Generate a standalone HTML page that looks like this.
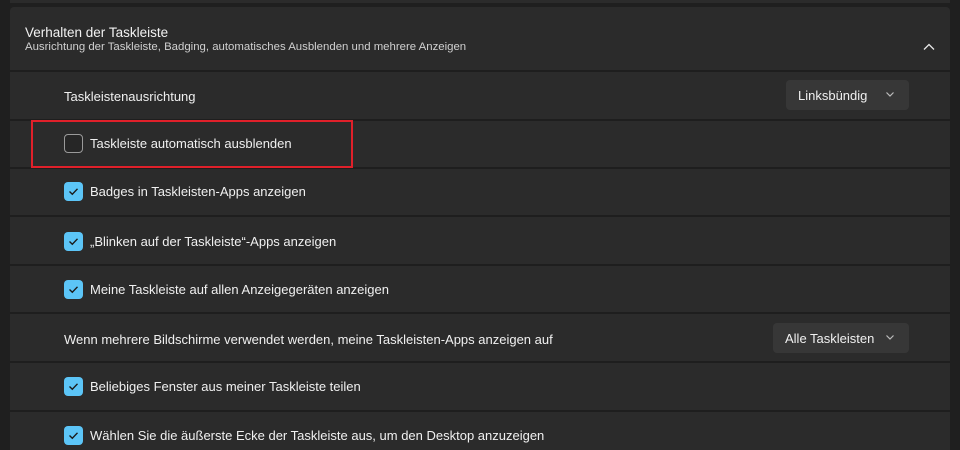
<!DOCTYPE html>
<html><head><meta charset="utf-8"><style>
*{margin:0;padding:0;box-sizing:border-box}
html,body{width:960px;height:450px;overflow:hidden}
body{background:#1f1f1f;font-family:"Liberation Sans",sans-serif;color:#fff;position:relative}
.topbar{position:absolute;left:10px;top:0;width:940px;height:3px;background:#2b2b2b}
.panel{position:absolute;left:10px;top:7px;width:940px;height:443px;background:#2b2b2b;border-radius:4px 4px 0 0;overflow:hidden}
.hdr{position:absolute;left:0;top:0;width:940px;height:64px}
.t1{position:absolute;left:15px;top:18px;font-size:13.5px;color:#f2f2f2}
.t2{position:absolute;left:15px;top:34px;font-size:11.4px;color:#d0d0d0}
.sep{position:absolute;left:0;width:940px;height:2px;background:#1e1e1e}
.txt{position:absolute;font-size:13px;color:#f0f0f0}
.cb{position:absolute;left:54px;width:19px;height:19px;border-radius:4px;background:#5cc5f7}
.cb svg{position:absolute;left:3px;top:3px}
.cbe{position:absolute;left:54px;width:19px;height:19px;border-radius:4px;border:1px solid #9a9a9a;background:#262626}
.dd{position:absolute;height:30px;background:#373737;border-radius:4px;font-size:13px;color:#f0f0f0;padding:8px 0 0 12px}
.dd svg{position:absolute;top:11px}
.red{position:absolute;left:31px;top:120px;width:322px;height:48px;border:2px solid #e0202a}
</style></head><body>
<div class="topbar"></div>
<div class="panel">
 <div class="hdr">
  <div class="t1">Verhalten der Taskleiste</div>
  <div class="t2">Ausrichtung der Taskleiste, Badging, automatisches Ausblenden und mehrere Anzeigen</div>
  <svg style="position:absolute;left:913px;top:36px" width="12" height="8" viewBox="0 0 12 8"><path d="M1 6.5 L6 1.5 L11 6.5" stroke="#e8e8e8" stroke-width="1.3" fill="none"/></svg>
 </div>
 <div class="sep" style="top:63px"></div>
 <div class="txt" style="left:54px;top:82px">Taskleistenausrichtung</div>
 <div class="dd" style="left:776px;top:73px;width:123px">Linksbündig<svg style="left:99px" width="10" height="7" viewBox="0 0 10 7"><path d="M1.5 1.5 L5 5 L8.5 1.5" stroke="#bbb" stroke-width="1.2" fill="none"/></svg></div>
 <div class="sep" style="top:112px"></div>
 <div class="cbe" style="top:127px"></div>
 <div class="txt" style="left:80px;top:129px">Taskleiste automatisch ausblenden</div>
 <div class="sep" style="top:160px"></div>
 <div class="cb" style="top:175px"><svg width="13" height="13" viewBox="0 0 13 13"><path d="M2.5 6.5 L5.3 9.2 L10.5 3.8" stroke="#1a1a1a" stroke-width="1.4" fill="none"/></svg></div>
 <div class="txt" style="left:80px;top:177px">Badges in Taskleisten-Apps anzeigen</div>
 <div class="sep" style="top:208px"></div>
 <div class="cb" style="top:225px"><svg width="13" height="13" viewBox="0 0 13 13"><path d="M2.5 6.5 L5.3 9.2 L10.5 3.8" stroke="#1a1a1a" stroke-width="1.4" fill="none"/></svg></div>
 <div class="txt" style="left:80px;top:227px">„Blinken auf der Taskleiste“-Apps anzeigen</div>
 <div class="sep" style="top:257px"></div>
 <div class="cb" style="top:273px"><svg width="13" height="13" viewBox="0 0 13 13"><path d="M2.5 6.5 L5.3 9.2 L10.5 3.8" stroke="#1a1a1a" stroke-width="1.4" fill="none"/></svg></div>
 <div class="txt" style="left:80px;top:275px">Meine Taskleiste auf allen Anzeigegeräten anzeigen</div>
 <div class="sep" style="top:305px"></div>
 <div class="txt" style="left:54px;top:325px">Wenn mehrere Bildschirme verwendet werden, meine Taskleisten-Apps anzeigen auf</div>
 <div class="dd" style="left:763px;top:316px;width:136px">Alle Taskleisten<svg style="left:112px" width="10" height="7" viewBox="0 0 10 7"><path d="M1.5 1.5 L5 5 L8.5 1.5" stroke="#bbb" stroke-width="1.2" fill="none"/></svg></div>
 <div class="sep" style="top:354px"></div>
 <div class="cb" style="top:370px"><svg width="13" height="13" viewBox="0 0 13 13"><path d="M2.5 6.5 L5.3 9.2 L10.5 3.8" stroke="#1a1a1a" stroke-width="1.4" fill="none"/></svg></div>
 <div class="txt" style="left:80px;top:372px">Beliebiges Fenster aus meiner Taskleiste teilen</div>
 <div class="sep" style="top:403px"></div>
 <div class="cb" style="top:419px"><svg width="13" height="13" viewBox="0 0 13 13"><path d="M2.5 6.5 L5.3 9.2 L10.5 3.8" stroke="#1a1a1a" stroke-width="1.4" fill="none"/></svg></div>
 <div class="txt" style="left:80px;top:421px">Wählen Sie die äußerste Ecke der Taskleiste aus, um den Desktop anzuzeigen</div>
</div>
<div class="red"></div>
</body></html>
